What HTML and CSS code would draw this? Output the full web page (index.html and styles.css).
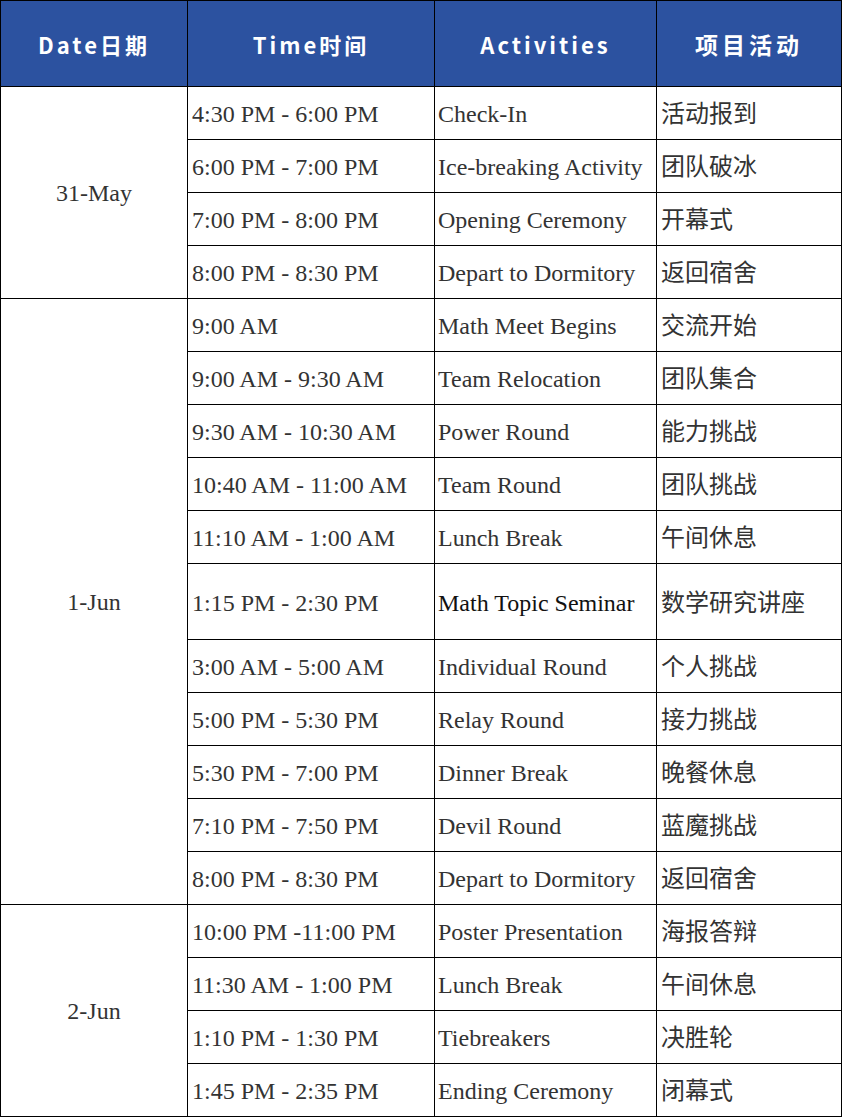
FILE: index.html
```html
<!DOCTYPE html>
<html lang="zh">
<head>
<meta charset="utf-8">
<title>Schedule</title>
<link rel="stylesheet" href="styles.css">
</head>
<body>
<table class="schedule">
  <colgroup>
    <col class="c-date">
    <col class="c-time">
    <col class="c-act">
    <col class="c-zh">
  </colgroup>
  <thead>
    <tr class="head">
      <th>Date日期</th>
      <th>Time时间</th>
      <th>Activities</th>
      <th class="zh-head">项目活动</th>
    </tr>
  </thead>
  <tbody>
    <tr><td class="date" rowspan="4">31-May</td><td>4:30 PM - 6:00 PM</td><td class="act">Check-In</td><td class="zh">活动报到</td></tr>
    <tr><td>6:00 PM - 7:00 PM</td><td class="act">Ice-breaking Activity</td><td class="zh">团队破冰</td></tr>
    <tr><td>7:00 PM - 8:00 PM</td><td class="act">Opening Ceremony</td><td class="zh">开幕式</td></tr>
    <tr><td>8:00 PM - 8:30 PM</td><td class="act">Depart to Dormitory</td><td class="zh">返回宿舍</td></tr>

    <tr><td class="date" rowspan="11">1-Jun</td><td>9:00 AM</td><td class="act">Math Meet Begins</td><td class="zh">交流开始</td></tr>
    <tr><td>9:00 AM - 9:30 AM</td><td class="act">Team Relocation</td><td class="zh">团队集合</td></tr>
    <tr><td>9:30 AM - 10:30 AM</td><td class="act">Power Round</td><td class="zh">能力挑战</td></tr>
    <tr><td>10:40 AM - 11:00 AM</td><td class="act">Team Round</td><td class="zh">团队挑战</td></tr>
    <tr><td>11:10 AM - 1:00 AM</td><td class="act">Lunch Break</td><td class="zh">午间休息</td></tr>
    <tr class="tall"><td>1:15 PM - 2:30 PM</td><td class="act dark">Math Topic Seminar</td><td class="zh">数学研究讲座</td></tr>
    <tr><td>3:00 AM - 5:00 AM</td><td class="act">Individual Round</td><td class="zh">个人挑战</td></tr>
    <tr><td>5:00 PM - 5:30 PM</td><td class="act">Relay Round</td><td class="zh">接力挑战</td></tr>
    <tr><td>5:30 PM - 7:00 PM</td><td class="act">Dinner Break</td><td class="zh">晚餐休息</td></tr>
    <tr><td>7:10 PM - 7:50 PM</td><td class="act">Devil Round</td><td class="zh">蓝魔挑战</td></tr>
    <tr><td>8:00 PM - 8:30 PM</td><td class="act">Depart to Dormitory</td><td class="zh">返回宿舍</td></tr>

    <tr><td class="date" rowspan="4">2-Jun</td><td>10:00 PM -11:00 PM</td><td class="act">Poster Presentation</td><td class="zh">海报答辩</td></tr>
    <tr><td>11:30 AM - 1:00 PM</td><td class="act">Lunch Break</td><td class="zh">午间休息</td></tr>
    <tr><td>1:10 PM - 1:30 PM</td><td class="act">Tiebreakers</td><td class="zh">决胜轮</td></tr>
    <tr><td>1:45 PM - 2:35 PM</td><td class="act">Ending Ceremony</td><td class="zh">闭幕式</td></tr>
  </tbody>
</table>
</body>
</html>
```

FILE: styles.css
```css
html, body {
  margin: 0;
  padding: 0;
  background: #ffffff;
}

.schedule {
  border-collapse: collapse;
  width: 841px;
  table-layout: fixed;
  font-family: "Liberation Serif", "Times New Roman", serif;
  font-size: 24px;
  line-height: 30px;
  color: #333333;
}

.c-date { width: 187px; }
.c-time { width: 247px; }
.c-act  { width: 222px; }
.c-zh   { width: 185px; }

.schedule th,
.schedule td {
  border: 1px solid #000000;
  padding: 2px 0 0 4px;
  text-align: left;
  vertical-align: middle;
  white-space: nowrap;
}

.schedule .head th {
  height: 85px;
  padding: 0;
  background: #2c52a0;
  color: #ffffff;
  text-align: center;
  font-family: "Noto Sans CJK SC", "DejaVu Sans", sans-serif;
  font-weight: 700;
  font-size: 22px;
  letter-spacing: 3px;
}

.schedule .head th.zh-head {
  font-size: 23px;
  letter-spacing: 4px;
}

.schedule tbody td {
  height: 50px;
}

.schedule tbody tr.tall td {
  height: 73px;
}

.schedule td.act {
  padding-left: 3px;
}

.schedule td.date {
  text-align: center;
  padding: 0;
}

.schedule td.dark {
  color: #111111;
}

.schedule td.zh {
  font-family: "Noto Sans CJK SC", sans-serif;
  font-size: 24px;
  padding: 0 0 2px 4px;
}
```
